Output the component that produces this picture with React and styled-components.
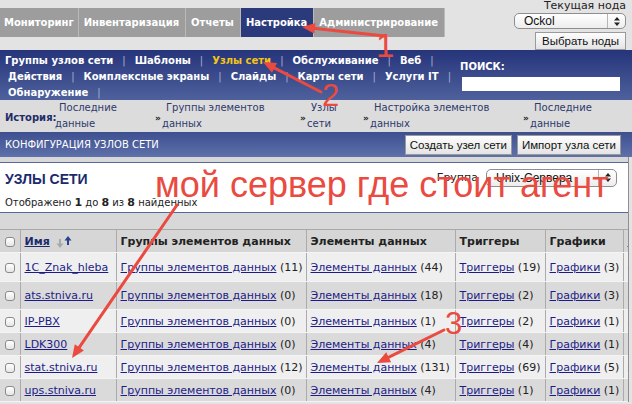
import React from 'react';
import styled, { createGlobalStyle } from 'styled-components';

const GlobalStyle = createGlobalStyle`
  html, body {
    margin: 0;
    padding: 0;
  }
  body {
    background: #e3e3e3;
    font-family: Verdana, 'DejaVu Sans', sans-serif;
    font-size: 11px;
    color: #222;
    overflow: hidden;
  }
`;

const Page = styled.div`
  position: relative;
  width: 632px;
  height: 404px;
  overflow: hidden;
`;

/* ---------- top tabs ---------- */

const TopBar = styled.div`
  display: flex;
  justify-content: space-between;
  height: 50px;
`;

const Tabs = styled.div`
  display: flex;
  margin-top: 8px;
  height: 29px;
`;

const Tab = styled.div`
  display: flex;
  align-items: center;
  padding: 0 6px 0 5px;
  background: ${p => (p.$active ? '#2b3a7b' : '#9d9d9d')};
  border-right: 1px solid #b9b9b9;
  color: #fff;
  font-weight: bold;
  font-size: 10px;

  &:first-child {
    padding: 0 4px 0 4px;
  }
`;

const NodePanel = styled.div`
  display: flex;
  flex-direction: column;
  align-items: flex-end;
  padding-right: 6px;
`;

const NodeLabel = styled.div`
  font-size: 11px;
  line-height: 12px;
  color: #222;
`;

const MacSelect = styled.div`
  position: relative;
  display: flex;
  align-items: center;
  width: ${p => p.$w}px;
  height: ${p => p.$h}px;
  box-sizing: border-box;
  padding-left: 9px;
  border: 1px solid #8e8e8e;
  border-radius: 5px;
  background: linear-gradient(#ffffff, #ededed);
  font-family: 'Liberation Sans', Arial, sans-serif;
  font-size: 12px;
  color: #111;
`;

const SelectArrows = styled.span`
  position: absolute;
  right: 0;
  top: 0;
  bottom: 0;
  width: 17px;
  border-left: 1px solid #b5b5b5;
  display: flex;
  align-items: center;
  justify-content: center;
`;

const MacButton = styled.div`
  display: flex;
  align-items: center;
  justify-content: center;
  height: 20px;
  box-sizing: border-box;
  padding: 0 ${p => p.$pad ?? 4}px;
  border: 1px solid #9a9a9a;
  background: linear-gradient(#fdfdfd, #e4e4e4);
  font-family: 'Liberation Sans', Arial, sans-serif;
  font-size: 11.5px;
  color: #111;
  white-space: nowrap;
`;

/* ---------- sub menu ---------- */

const SubMenu = styled.div`
  display: flex;
  justify-content: space-between;
  height: 50px;
  background: linear-gradient(#26347a, #4e619c);
`;

const MenuLines = styled.div`
  padding: 2px 0 0 5px;
`;

const MenuRow = styled.div`
  display: flex;
  height: 16px;
  align-items: center;
  padding-left: ${p => p.$indent || 0}px;
`;

const MenuItem = styled.span`
  color: ${p => (p.$current ? '#f4c418' : '#fff')};
  font-weight: bold;
  font-size: 10px;
  white-space: nowrap;
`;

const MenuSep = styled.span`
  color: #a7b0cf;
  font-size: 10px;
  margin: 0 9px;
`;

const Search = styled.div`
  display: flex;
  flex-direction: column;
  width: 162px;
  padding: 10px 12px 0 0;
`;

const SearchLabel = styled.div`
  color: #fff;
  font-weight: bold;
  font-size: 10px;
  height: 17px;
  line-height: 14px;
`;

const SearchInput = styled.div`
  height: 14px;
  margin-left: 2px;
  background: #fff;
`;

/* ---------- history ---------- */

const History = styled.div`
  display: flex;
  align-items: center;
  height: 32px;
  background: #dcdcdc;
`;

const HistoryLabel = styled.div`
  width: 50px;
  padding-left: 5px;
  padding-top: 2px;
  font-weight: bold;
  font-size: 10px;
  color: #1f2c6a;
`;

const HistoryItem = styled.div`
  display: flex;
  align-items: center;
  width: ${p => p.$w}px;
`;

const Chevron = styled.span`
  font-size: 9px;
  font-weight: bold;
  color: #222;
  width: 7px;
  padding-top: 4px;
`;

const HistoryLink = styled.div`
  font-size: 10px;
  line-height: 16px;
  color: #2d3a6d;
  text-indent: 4px;
`;

/* ---------- config bar ---------- */

const ConfigBar = styled.div`
  display: flex;
  justify-content: space-between;
  align-items: center;
  height: 25px;
  padding: 0 11px 0 5px;
  background: linear-gradient(#3d4f8f, #5e71aa);
`;

const ConfigTitle = styled.div`
  color: #fff;
  font-size: 10px;
`;

const ButtonRow = styled.div`
  display: flex;
  gap: 5px;
  padding-top: 1px;
`;

/* ---------- nodes box ---------- */

const Content = styled.div`
  background: #d8d8d8;
  padding-top: 5px;
  margin-right: 3px;
  border-right: 1px solid #8f8f8f;
`;

const NodesBox = styled.div`
  display: flex;
  justify-content: space-between;
  height: 49px;
  background: #fff;
  border-top: 1px solid #55679f;
  border-bottom: 1px solid #55679f;
`;

const NodesHead = styled.div`
  padding: 8px 0 0 5px;
`;

const NodesTitle = styled.div`
  font-family: 'Liberation Sans', Arial, sans-serif;
  font-weight: bold;
  font-size: 14px;
  color: #1c2a6c;
`;

const NodesCount = styled.div`
  margin-top: 9px;
  font-size: 10px;

  b {
    font-size: 11px;
  }
`;

const GroupFilter = styled.div`
  display: flex;
  align-items: center;
  gap: 8px;
  padding: 5px 11px 0 0;
  height: 19px;
  font-size: 11px;
`;

/* ---------- table ---------- */

const TableWrap = styled.div`
  margin-top: 16px;
  overflow: hidden;
`;

const Table = styled.table`
  border-collapse: collapse;
  table-layout: fixed;
  width: 724px;
  border-top: 1px solid #a8a8a8;

  td, th {
    border-right: 1px solid #ababab;
    border-bottom: 1px solid #f4f4f4;
    padding: 0 4px;
    white-space: nowrap;
    overflow: hidden;
    text-align: left;
  }
`;

const HeadRow = styled.tr`
  height: 23px;
  background: #d6d6d6;

  th {
    font-size: 11px;
    font-weight: bold;
    color: #222;
  }
`;

const Row = styled.tr`
  height: ${p => p.$h}px;
  background: ${p => (p.$odd ? '#dadada' : '#efefef')};
  font-size: 11px;
`;

const Link = styled.a`
  color: #1d1c87;
  text-decoration: underline;
`;

const SortLink = styled(Link)`
  color: #1c2a6c;
`;

const Box = styled.span`
  display: inline-block;
  width: 10px;
  height: 10px;
  box-sizing: border-box;
  border: 1px solid #8a8a8a;
  border-radius: 3px;
  background: linear-gradient(#ffffff, #e6e6e6);
  vertical-align: middle;
  margin-left: 1px;
`;

/* ---------- annotations ---------- */

const Overlay = styled.svg`
  position: absolute;
  left: 0;
  top: 0;
  pointer-events: none;
`;

const Mark = styled.div`
  position: absolute;
  left: ${p => p.$x}px;
  top: ${p => p.$y}px;
  font-family: 'Liberation Sans', Arial, sans-serif;
  font-size: ${p => p.$size}px;
  line-height: 1;
  color: #ea4a3f;
  white-space: nowrap;
  pointer-events: none;
`;

const RED = '#ea4a3f';

const Arrow = ({ from, to }) => {
  const [x1, y1] = from;
  const [x2, y2] = to;
  const len = Math.hypot(x2 - x1, y2 - y1);
  const ux = (x2 - x1) / len;
  const uy = (y2 - y1) / len;
  const head = 13;
  const half = 5.5;
  const bx = x2 - ux * head;
  const by = y2 - uy * head;
  const pts = [
    [x2, y2],
    [bx - uy * half, by + ux * half],
    [bx + uy * half, by - ux * half],
  ]
    .map(p => p.join(','))
    .join(' ');
  return (
    <g>
      <line x1={x1} y1={y1} x2={bx + ux * 2} y2={by + uy * 2} stroke={RED} strokeWidth="3" strokeLinecap="round" />
      <polygon points={pts} fill={RED} />
    </g>
  );
};

const UpDown = () => (
  <svg width="6" height="9" viewBox="0 0 6 9">
    <path d="M3 0 L6 3.5 L0 3.5 Z M3 9 L6 5.5 L0 5.5 Z" fill="#222" />
  </svg>
);

const SortIcons = () => (
  <svg width="16" height="12" viewBox="0 0 16 12" style={{ marginLeft: 6, verticalAlign: 'middle' }}>
    <path d="M4 12 L0.5 7.5 L3 7.5 L3 3 L5 3 L5 7.5 L7.5 7.5 Z" fill="#a9a9a9" />
    <path d="M12 0 L15.5 4.5 L13 4.5 L13 9 L11 9 L11 4.5 L8.5 4.5 Z" fill="#27428f" />
  </svg>
);

const tabs = ['Мониторинг', 'Инвентаризация', 'Отчеты', 'Настройка', 'Администрирование'];

const menu = [
  { indent: 0, items: ['Группы узлов сети', 'Шаблоны', 'Узлы сети', 'Обслуживание', 'Веб'] },
  { indent: 3, items: ['Действия', 'Комплексные экраны', 'Слайды', 'Карты сети', 'Услуги IT'] },
  { indent: 3, items: ['Обнаружение'] },
];

const history = [
  { w: 100, text: 'Последние данные', arrow: false },
  { w: 145, text: 'Группы элементов данных', arrow: true },
  { w: 63, text: 'Узлы сети', arrow: true },
  { w: 160, text: 'Настройка элементов данных', arrow: true },
  { w: 100, text: 'Последние данные', arrow: true },
];

const hosts = [
  { name: '1C_Znak_hleba', groups: 11, items: 44, triggers: 19, graphs: 3, dns: '-', h: 29 },
  { name: 'ats.stniva.ru', groups: 0, items: 18, triggers: 2, graphs: 3, dns: 'ats.stniva.ru', h: 28 },
  { name: 'IP-PBX', groups: 0, items: 1, triggers: 2, graphs: 1, dns: 'asterisk', h: 23 },
  { name: 'LDK300', groups: 0, items: 4, triggers: 4, graphs: 1, dns: 'ldk300', h: 23 },
  { name: 'stat.stniva.ru', groups: 12, items: 131, triggers: 69, graphs: 5, dns: 'stat.stniva.ru', h: 23 },
  { name: 'ups.stniva.ru', groups: 0, items: 4, triggers: 1, graphs: 1, dns: 'ups.stniva.ru', h: 23 },
];

const widths = [20, 96, 190, 149, 90, 78, 101];

const App = () => {
  return (
    <Page>
      <GlobalStyle />

      <TopBar>
        <Tabs>
          {tabs.map(t => (
            <Tab key={t} $active={t === 'Настройка'}>
              {t}
            </Tab>
          ))}
        </Tabs>
        <NodePanel>
          <NodeLabel>Текущая нода</NodeLabel>
          <MacSelect $w={112} $h={16} style={{ marginTop: 1 }}>
            Ockol
            <SelectArrows>
              <UpDown />
            </SelectArrows>
          </MacSelect>
          <MacButton $pad={6} style={{ marginTop: 3, height: 19 }}>
            Выбрать ноды
          </MacButton>
        </NodePanel>
      </TopBar>

      <SubMenu>
        <MenuLines>
          {menu.map((row, i) => (
            <MenuRow key={i} $indent={row.indent}>
              {row.items.map(item => (
                <React.Fragment key={item}>
                  <MenuItem $current={item === 'Узлы сети'}>{item}</MenuItem>
                  <MenuSep>|</MenuSep>
                </React.Fragment>
              ))}
            </MenuRow>
          ))}
        </MenuLines>
        <Search>
          <SearchLabel>ПОИСК:</SearchLabel>
          <SearchInput />
        </Search>
      </SubMenu>

      <History>
        <HistoryLabel>История:</HistoryLabel>
        {history.map((h, i) => (
          <HistoryItem key={i} $w={h.w}>
            {h.arrow && <Chevron>»</Chevron>}
            <HistoryLink>
              {h.text.split(' ').slice(0, -1).join(' ')}
              <br />
              {h.text.split(' ').slice(-1)}
            </HistoryLink>
          </HistoryItem>
        ))}
      </History>

      <ConfigBar>
        <ConfigTitle>КОНФИГУРАЦИЯ УЗЛОВ СЕТИ</ConfigTitle>
        <ButtonRow>
          <MacButton>Создать узел сети</MacButton>
          <MacButton>Импорт узла сети</MacButton>
        </ButtonRow>
      </ConfigBar>

      <Content>
        <NodesBox>
          <NodesHead>
            <NodesTitle>УЗЛЫ СЕТИ</NodesTitle>
            <NodesCount>
              Отображено <b>1</b> до <b>8</b> из <b>8</b> найденных
            </NodesCount>
          </NodesHead>
          <GroupFilter>
            Группа
            <MacSelect $w={131} $h={18}>
              Unix-Сервера
              <SelectArrows>
                <UpDown />
              </SelectArrows>
            </MacSelect>
          </GroupFilter>
        </NodesBox>

        <TableWrap>
          <Table>
            <colgroup>
              {widths.map((w, i) => (
                <col key={i} style={{ width: w }} />
              ))}
            </colgroup>
            <thead>
              <HeadRow>
                <th>
                  <Box />
                </th>
                <th>
                  <SortLink>Имя</SortLink>
                  <SortIcons />
                </th>
                <th>Группы элементов данных</th>
                <th>Элементы данных</th>
                <th>Триггеры</th>
                <th>Графики</th>
                <th>
                  <SortLink>Приложения</SortLink>
                </th>
              </HeadRow>
            </thead>
            <tbody>
              {hosts.map((h, i) => (
                <Row key={h.name} $odd={i % 2 === 1} $h={h.h}>
                  <td>
                    <Box />
                  </td>
                  <td>
                    <Link>{h.name}</Link>
                  </td>
                  <td>
                    <Link>Группы элементов данных</Link> ({h.groups})
                  </td>
                  <td>
                    <Link>Элементы данных</Link> ({h.items})
                  </td>
                  <td>
                    <Link>Триггеры</Link> ({h.triggers})
                  </td>
                  <td>
                    <Link>Графики</Link> ({h.graphs})
                  </td>
                  <td>{h.dns}</td>
                </Row>
              ))}
            </tbody>
          </Table>
        </TableWrap>
      </Content>

      <Overlay width="632" height="404">
        <Arrow from={[385, 36]} to={[302, 27]} />
        <Arrow from={[321, 92]} to={[263, 62]} />
        <Arrow from={[177, 205]} to={[72, 358]} />
        <Arrow from={[444, 330]} to={[377, 363]} />
      </Overlay>
      <Mark $x={376} $y={29} $size={33}>1</Mark>
      <Mark $x={322} $y={80} $size={31}>2</Mark>
      <Mark $x={445} $y={308} $size={31}>3</Mark>
      <Mark $x={155} $y={167} $size={36}>мой сервер где стоит агент</Mark>
    </Page>
  );
};

export default App;
